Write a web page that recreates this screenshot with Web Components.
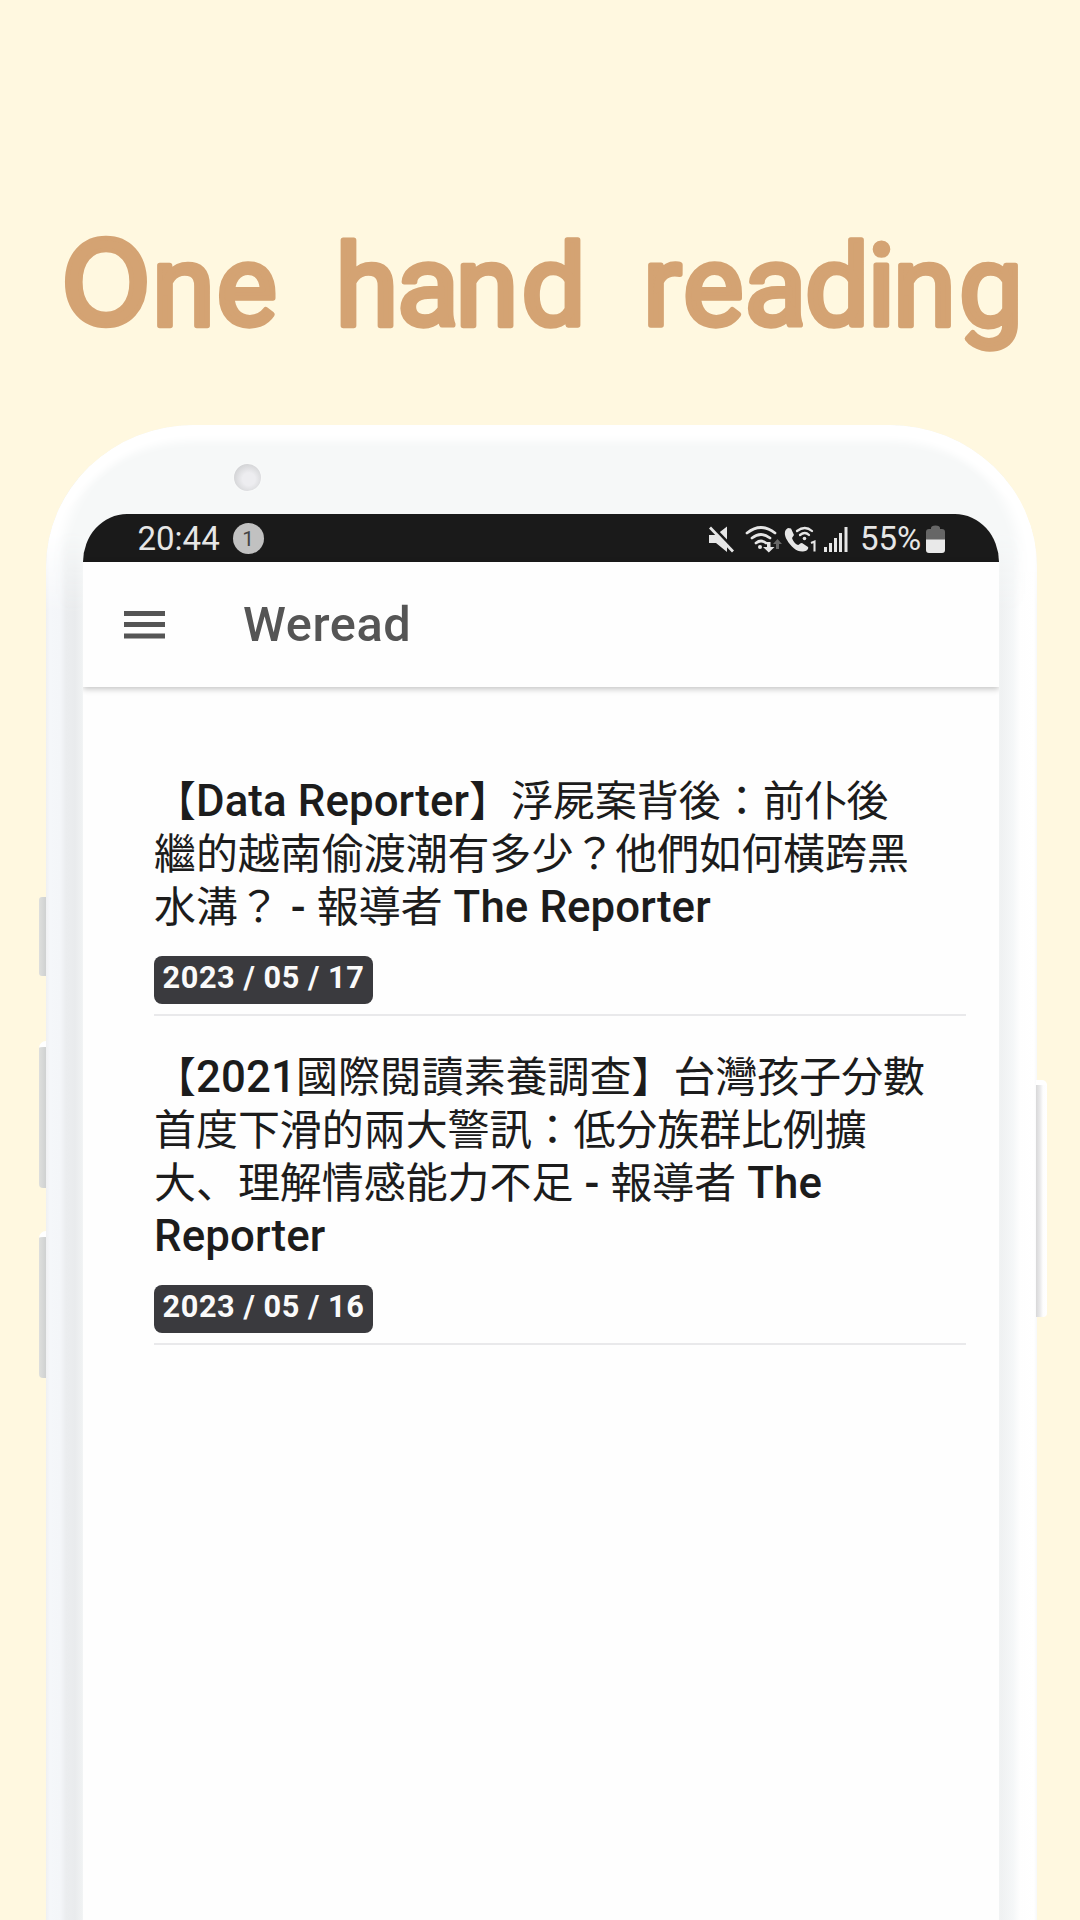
<!DOCTYPE html>
<html lang="en">
<head>
<meta charset="utf-8">
<title>Weread</title>
<style>
html,body{margin:0;padding:0;background:#fff8e0}
body{width:1080px;height:1920px;overflow:hidden;font-family:Roboto,"Noto Sans CJK JP",sans-serif}
article-item b{font-weight:500;font-size:43.8px;letter-spacing:.1px}
</style>
</head>
<body>
<promo-page>
  <promo-title slot="title"></promo-title>
  <phone-frame>
    <status-bar time="20:44" count="1" battery="55%"></status-bar>
    <app-header>Weread</app-header>
    <article-list>
      <article-item date="2023 / 05 / 17">【<b>Data Reporter</b>】浮屍案背後：前仆後<br>繼的越南偷渡潮有多少？他們如何橫跨黑<br>水溝？<b> - </b>報導者<b> The Reporter</b></article-item>
      <article-item date="2023 / 05 / 16">【<b>2021</b>國際閱讀素養調查】台灣孩子分數<br>首度下滑的兩大警訊：低分族群比例擴<br>大、理解情感能力不足<b> - </b>報導者<b> The</b><br><b>Reporter</b></article-item>
    </article-list>
  </phone-frame>
</promo-page>
<script>
const define = (name, html) => customElements.define(name, class extends HTMLElement {
  constructor() {
    super();
    this.attachShadow({mode: 'open'}).innerHTML = html.replace(/\{(\w+)\}/g, (m, k) => this.getAttribute(k) ?? '');
  }
});

define('promo-page', `
<style>
:host{display:flex;flex-direction:column;width:1080px;height:1920px;background:#fff8e0;overflow:hidden}
header{height:425px;flex:none}
main{flex:1;display:flex;padding:0 43px 0 46px}
</style>
<header><slot name="title"></slot></header>
<main><slot></slot></main>`);

define('promo-title', `
<style>
:host{display:block;padding-top:200px}
svg{display:block}
text{font:400 114px Roboto,"Liberation Sans",sans-serif;fill:#d4a373;stroke:#d4a373;stroke-width:5.4px;stroke-linejoin:round}
.cap{font:500 118px Inter,"Liberation Sans",sans-serif;stroke-width:4.6px}
</style>
<svg width="1080" height="180" viewBox="0 200 1080 180"><text y="324.500"><tspan class="cap" x="60.8">O</tspan><tspan x="152 216.500">ne </tspan><tspan x="335.500 397 455.500 521.500">hand </tspan><tspan x="643 683 744.500 805 867.500 893 959">reading</tspan></text></svg>`);

define('phone-frame', `
<style>
:host{display:block;position:relative;flex:1;min-width:0}
.body{box-sizing:border-box;height:100%;display:flex;flex-direction:column;padding:89px 37px 0;border-radius:148px 148px 0 0/142px 142px 0 0;overflow:hidden;
 background:linear-gradient(90deg,#eff0f2 0,#f5f7fa 4px,#f4f6f9 14px,#ebedef 20px,#e9ebed 29px,#f0f2f3 36px,#f7f8f8 38px,#f5f7f7 950px,#eff1f2 955px,#f5f7f8 967px,#fefefe 974px,#fff 988px,#f7f8f9 991px)}
.shine{position:absolute;inset:0 0 auto 0;height:190px;border-radius:148px 148px 0 0/142px 142px 0 0;background:#f6f8f8;box-shadow:inset 0 19px 9px -3px #fff,inset 14px 0 12px #fff,inset -16px 0 12px #fff;
 -webkit-mask-image:linear-gradient(#000 55%,transparent)}
.cam{position:absolute;left:188px;top:39px;width:27px;height:27px;border-radius:50%;background:radial-gradient(circle at 55% 56%,#ededf0 0 30%,#d2d3d5 74%);box-shadow:0 0 2px #fff}
.screen{position:relative;flex:1;display:flex;flex-direction:column;background:#fff;margin-right:1px;border-radius:44px 44px 0 0/48px 48px 0 0;overflow:hidden}
.btn{position:absolute;width:7px;background:linear-gradient(90deg,#dedfdd,#cfd1d1);left:-7px;border-radius:3px 0 0 3px}
.lit{border-top:6px solid #fff;border-radius:7px 0 0 4px}
.r{left:990px;width:11px;background:linear-gradient(90deg,#d8d8d9,#e9e9ea 4px,#fdfdfd 7px,#fff);border-top:5px solid #fff;border-radius:0 5px 4px 0}
</style>
<div class="btn" style="top:472px;height:79px"></div>
<div class="btn lit" style="top:616px;height:141px"></div>
<div class="btn lit" style="top:806px;height:141px"></div>
<div class="btn r" style="top:655px;height:232px"></div>
<div class="body"><div class="shine"></div><div class="cam"></div><div class="screen"><slot></slot></div></div>`);

define('status-bar', `
<style>
:host{display:flex;align-items:center;height:48px;flex:none;box-sizing:border-box;padding:1px 54px 0 54.500px;background:#1a1a1a;color:#e6e6e6;font:33px/48px Roboto,sans-serif}
.n{width:31px;height:31px;border-radius:50%;background:#c1c1c1;color:#444;font-size:21px;line-height:32px;text-align:center;margin-left:13px}
svg{display:block;margin-left:auto}
.p{width:61px;margin-left:12px;white-space:nowrap}
.b{margin-left:5px}
</style>
<span>{time}</span><span class="n">{count}</span>
<svg width="140" height="32" viewBox="708 522 140 32" fill="#e6e6e6">
 <path d="M709 534h7l11-8.500v25.500l-11-9h-7z"/>
 <path d="M711.500 524.500l24 25" stroke="#1a1a1a" stroke-width="3"/>
 <path d="M710 526.500l23 24" stroke="#e6e6e6" stroke-width="2.8" fill="none"/>
 <g fill="none" stroke="#e6e6e6" stroke-width="2.800" stroke-linecap="round"><path d="M747 532q14-11 28 0"/><path d="M752 537q9-7 18 0"/><path d="M756 542q5-4 10 0"/></g>
 <circle cx="760" cy="546" r="2"/>
 <path d="M767 541h3.500v5h4l-5.700 5.500-5.800-5.500h4z"/><path d="M776 548v-5h-3l4.500-5 4.500 5h-3v5z" fill="#666"/>
 <path d="M788 527c-4 2-4 7-1 12 4 7 10 12 16 11.500 4 0 6-3 5-4.500l-6-4c-2 0-3 2-4 2-3-1-5-4-6-7l2-3-3-6.500z"/>
 <g fill="none" stroke="#e6e6e6" stroke-width="2.300" stroke-linecap="round"><path d="M797 530q8-6 15 0"/><path d="M800 534q5-4 9 0"/></g>
 <circle cx="804.500" cy="537.500" r="1.800"/>
 <path d="M811 542l3.500-1.500v10" stroke="#e6e6e6" stroke-width="2.100" fill="none"/>
 <path d="M824 546h3v5h-3zM829 542h3v9h-3zM834 537h3v14h-3zM839 532h3v19h-3zM844.500 526h3v25h-3z"/>
</svg>
<span class="p">{battery}</span>
<svg class="b" width="19" height="28" viewBox="0 0 19 28"><path d="M5 3q0-2.500 4.500-2.500t4.500 2.500v1h2q3 0 3 3v8H0V7q0-3 3-3h2z" fill="#666"/><path d="M0 14.500h19V25q0 3-3 3H3q-3 0-3-3z" fill="#e9e9e9"/></svg>`);

define('app-header', `
<style>
:host{display:flex;align-items:center;height:124.500px;flex:none;box-sizing:border-box;padding:0 41px;background:#fefefe;box-shadow:0 2px 6px rgba(0,0,0,.24);color:#555;z-index:1}
svg{display:block;margin-top:1px}
span{margin:1px 0 0 78px;font:500 48.700px/60px Roboto,sans-serif;letter-spacing:.6px}
</style>
<svg width="41" height="29" fill="#555"><path d="M0 1h41v5H0zM0 12h41v5H0zM0 23.500h41v5H0z"/></svg><span><slot></slot></span>`);

define('article-list', `
<style>:host{display:flex;flex-direction:column;flex:1;padding:87.500px 33px 0 71px;background:#fefefe}</style><slot></slot>`);

define('article-item', `
<style>
:host{display:flex;flex-direction:column;align-items:flex-start;border-bottom:2px solid #e9e9eb;margin-bottom:34px}
h2{margin:0;padding-top:1.200px;font:400 41.950px/52.400px Roboto,"Noto Sans CJK JP",sans-serif;white-space:nowrap;color:#1c1c1c;text-spacing-trim:space-all}
time{box-sizing:border-box;height:48px;width:219px;text-align:center;white-space:nowrap;border-radius:8px;background:#3a3a3e;color:#fafafa;font:700 30.700px/44px Roboto,sans-serif;letter-spacing:.55px;margin:21.500px 0 10px}
</style>
<h2><slot></slot></h2><time>{date}</time>`);
</script>
</body>
</html>
